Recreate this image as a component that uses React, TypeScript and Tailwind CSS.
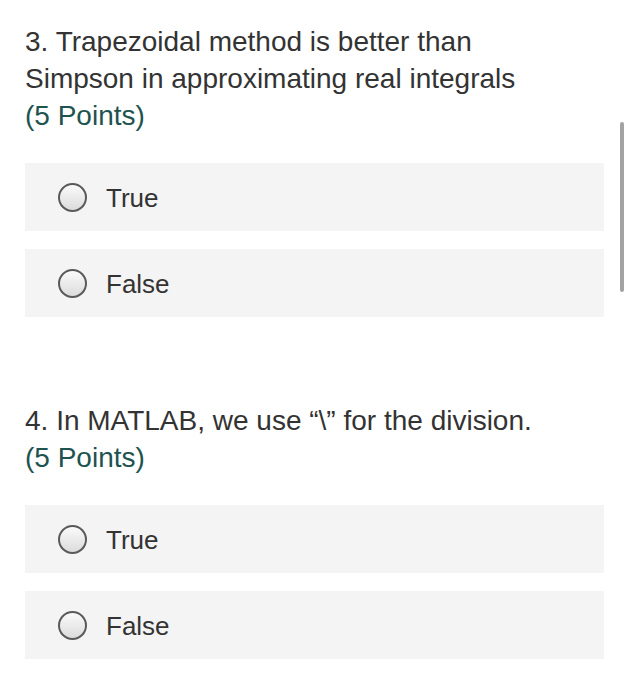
import React from "react";

function Option({ label }: { label: string }) {
  return (
    <div className="flex h-[68px] items-center bg-[#f4f4f4] pl-[33px]">
      <span className="h-[29px] w-[29px] shrink-0 rounded-full border-2 border-[#5a5a5a] bg-gradient-to-b from-[#fafafa] to-[#dcdcdc]" />
      <span className="ml-[19px] mt-[2px] text-[26px] leading-none text-[#333333]">{label}</span>
    </div>
  );
}

export default function App() {
  return (
    <div
      className="relative h-[700px] w-[629px] overflow-hidden bg-white"
      style={{ fontFamily: '"Liberation Sans", Arial, sans-serif' }}
    >
      <div className="absolute right-[5px] top-[122px] h-[170px] w-[4px] rounded-full bg-[#a3a3a3]" />
      <div className="pl-[25px] pr-[25px] pt-[23px]">
        <div className="text-[28px] leading-[37px] text-[#333333]">
          <div>3. Trapezoidal method is better than</div>
          <div>Simpson in approximating real integrals</div>
          <div className="text-[#1e5350]">(5 Points)</div>
        </div>
        <div className="mt-[29px] flex flex-col gap-[18px]">
          <Option label="True" />
          <Option label="False" />
        </div>
        <div className="mt-[85px] text-[28px] leading-[37px] text-[#333333]">
          <div>4. In MATLAB, we use “\” for the division.</div>
          <div className="text-[#1e5350]">(5 Points)</div>
        </div>
        <div className="mt-[29px] flex flex-col gap-[18px]">
          <Option label="True" />
          <Option label="False" />
        </div>
      </div>
    </div>
  );
}
